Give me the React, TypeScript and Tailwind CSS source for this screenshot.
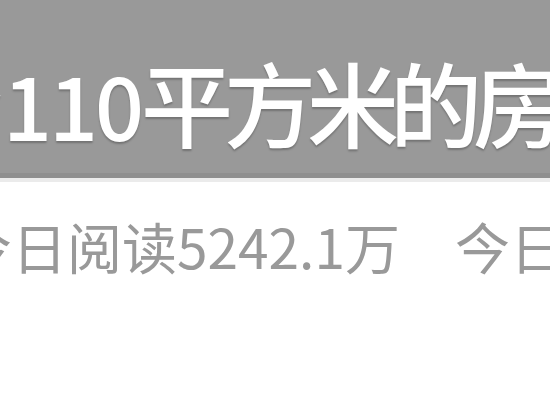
export default function App() {
  return (
    <div
      className="w-[550px] h-[412px] overflow-hidden bg-white"
      style={{ fontFamily: '"Noto Sans CJK SC", "Noto Sans", sans-serif' }}
    >
      {/* Title banner */}
      <div className="h-[178px] bg-[#999999] border-b-[5px] border-[#8f8f8f] overflow-hidden">
        <div
          className="pt-[55px] ml-[-89px] whitespace-nowrap text-[92px] leading-none font-medium tracking-[-9px] text-white"
          style={{ textShadow: "0 2px 2px rgba(0,0,0,0.25)" }}
        >
          <span className="tracking-[0px]">套</span>
          <span className="text-[86px] tracking-[-3px]">110</span>平方米的房子装修
        </div>
      </div>
      <div className="h-[4px] bg-[#ebebeb]" />

      {/* Stats row */}
      <div className="mt-[36px] ml-[-43px] flex whitespace-nowrap text-[55px] leading-none text-[#999999]">
        <span>今日阅读5242.1万</span>
        <span className="ml-[55px]">今日讨论</span>
      </div>
    </div>
  )
}
